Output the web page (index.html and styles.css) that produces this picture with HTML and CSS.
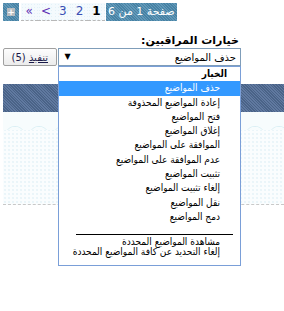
FILE: index.html
```html
<!DOCTYPE html>
<html lang="ar" dir="rtl">
<head>
<meta charset="utf-8">
<link rel="stylesheet" href="styles.css">
</head>
<body>
<div class="pager" dir="ltr">
  <span class="pg-plus"><span class="plus-box">+</span></span>
  <span class="pg arrow">«</span>
  <span class="pg arrow">&lt;</span>
  <span class="pg">3</span>
  <span class="pg">2</span>
  <span class="pg cur">1</span>
  <span class="pg-title" dir="rtl">صفحة 1 من 6</span>
</div>

<div class="mod">
  <div class="mod-label">خيارات المراقبين:</div>
  <div class="mod-row">
    <div class="select">
      <span class="sel-text">حذف المواضيع</span>
      <span class="sel-arrow">▼</span>
    </div>
    <button class="go"><u>تنفيذ</u> (5)</button>
  </div>
</div>

<div class="band"></div>
<div class="lightrow">
  <div class="ornament"></div>
</div>

<div class="droplist">
  <div class="grp">الخيار</div>
  <div class="opt sel">حذف المواضيع</div>
  <div class="opt">إعادة المواضيع المحذوفة</div>
  <div class="opt">فتح المواضيع</div>
  <div class="opt">إغلاق المواضيع</div>
  <div class="opt">الموافقة على المواضيع</div>
  <div class="opt">عدم الموافقة على المواضيع</div>
  <div class="opt">تثبيت المواضيع</div>
  <div class="opt">إلغاء تثبيت المواضيع</div>
  <div class="opt">نقل المواضيع</div>
  <div class="opt">دمج المواضيع</div>
  <div class="sep"><span class="sep-line"></span></div>
  <div class="opt small">مشاهدة المواضيع المحددة</div>
  <div class="opt small">إلغاء التحديد عن كافة المواضيع المحددة</div>
</div>
</body>
</html>
```
FILE: styles.css
```css
html, body {
  margin: 0;
  padding: 0;
  background: #ffffff;
}
body {
  direction: rtl;
  font-family: "DejaVu Sans", sans-serif;
  font-size: 11px;
  color: #000;
  position: relative;
  overflow: hidden;
  width: 284px;
  height: 311px;
}

/* pager */
.pager {
  display: flex;
  direction: ltr;
  padding: 3px 0 0 3px;
  height: 18px;
  width: 174px;
  margin-left: 0;
  margin-right: auto;
}
.pg-title {
  width: 72px;
  height: 18px;
  line-height: 18px;
  text-align: center;
  color: #fff;
  font-size: 11px;
  background-color: #4b8aae;
  background-image: repeating-linear-gradient(45deg, rgba(255,255,255,0.12) 0 1px, rgba(0,0,0,0.06) 1px 2px);
  margin-left: 1px;
}
.pg {
  width: 17px;
  height: 17px;
  line-height: 17px;
  text-align: center;
  font-size: 12px;
  color: #3b4fb4;
  background-color: #f4fafd;
  background-image: radial-gradient(circle, #e3f1f8 0.6px, transparent 0.8px);
  background-size: 3px 3px;
  border-bottom: 1px dashed #b8b8b8;
}
.pg.cur {
  color: #000;
  font-weight: bold;
}
.pg.arrow {
  color: #5c2fb4;
  font-size: 12px;
}
.pg-plus {
  width: 16px;
  height: 18px;
  margin-right: 2px;
  display: flex;
  align-items: center;
  justify-content: center;
  background-color: #4b8aae;
  background-image: repeating-linear-gradient(45deg, rgba(255,255,255,0.12) 0 1px, rgba(0,0,0,0.06) 1px 2px);
}
.plus-box {
  width: 8px;
  height: 8px;
  background: #b7bcc0;
  color: #fff;
  font-size: 9px;
  line-height: 8px;
  text-align: center;
  font-weight: bold;
}

/* moderator form */
.mod {
  width: 238px;
  margin-left: 3px;
  margin-right: auto;
  margin-top: 13px;
}
.mod-label {
  text-align: right;
  font-weight: bold;
  font-size: 11px;
  line-height: 14px;
  padding-right: 2px;
}
.mod-row {
  display: flex;
  gap: 1px;
}
.select {
  height: 16px;
  border: 1px solid #7f9db9;
  background: #fff;
  display: flex;
  justify-content: space-between;
  align-items: center;
  padding: 0 4px 0 6px;
  box-sizing: content-box;
  width: 173px;
}
.sel-text {
  font-size: 10px;
}
.sel-arrow {
  font-size: 8px;
  line-height: 8px;
}
.go {
  width: 54px;
  height: 18px;
  padding: 0;
  margin: 0;
  font-family: "DejaVu Sans", sans-serif;
  font-size: 10px;
  color: #1a1a4a;
  border: 1px solid #a0a0a0;
  border-radius: 2px;
  background: linear-gradient(#fdfdfd, #ececec);
  direction: rtl;
}

/* background bars */
.band {
  margin-top: 18px;
  margin-left: 3px;
  height: 28px;
  background-color: #536d90;
  background-image: repeating-linear-gradient(45deg, #4a6387 0 1px, #6079a0 1px 2px);
}
.lightrow {
  margin-left: 3px;
  height: 92px;
  background-color: #fafdfe;
  background-image: radial-gradient(circle, #eaf5f9 0.7px, transparent 0.9px);
  background-size: 4px 4px;
  border-bottom: 1px dashed #c8c8c8;
}
.ornament {
  height: 18px;
  background-color: #f7fcfd;
  background-image: radial-gradient(circle at 50% 120%, transparent 9px, #dcf0f5 9.5px, transparent 10.5px);
  background-size: 24px 20px;
}

/* dropdown list overlay */
.droplist {
  position: absolute;
  left: 58px;
  top: 66px;
  width: 181px;
  height: 198px;
  border: 1px solid #7a9fd8;
  background: #fff;
  font-family: "DejaVu Sans Condensed", "DejaVu Sans", sans-serif;
  font-stretch: condensed;
  font-size: 10px;
}
.grp {
  height: 14.3px;
  line-height: 14px;
  font-weight: bold;
  padding-right: 13px;
}
.opt {
  height: 14.3px;
  line-height: 14px;
  padding-right: 20px;
  white-space: nowrap;
}
.opt.sel {
  background: #3399ff;
  color: #fff;
}
.opt.small {
  height: 10px;
  line-height: 10px;
}
.sep {
  height: 13px;
  position: relative;
}
.sep-line {
  position: absolute;
  right: 7px;
  top: 10px;
  width: 157px;
  height: 1px;
  background: #000;
}
```
